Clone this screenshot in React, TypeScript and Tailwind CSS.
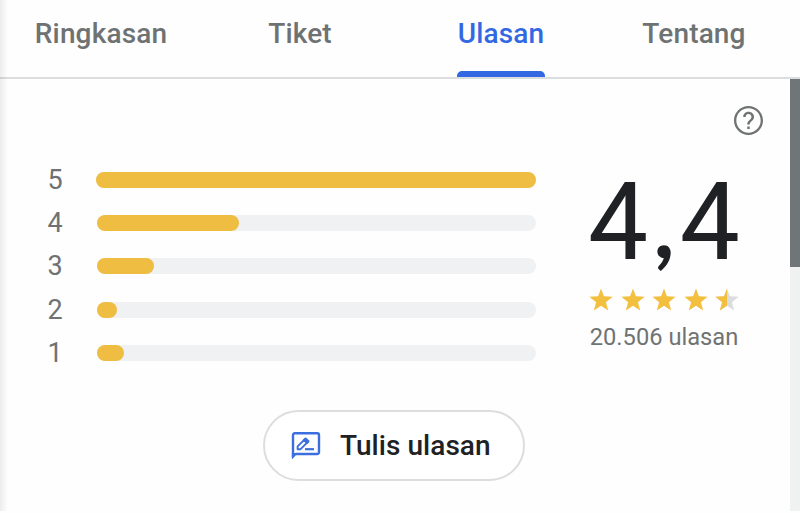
const tabs = [
  { label: 'Ringkasan', box: 'ml-[35px] w-[132px]', tone: 'text-[#6f7272]', active: false },
  { label: 'Tiket', box: 'ml-[102px] w-[62px]', tone: 'text-[#6f7272]', active: false },
  { label: 'Ulasan', box: 'ml-[126px] w-[88px]', tone: 'text-[#3268e2]', active: true },
  { label: 'Tentang', box: 'ml-[97px] w-[104px]', tone: 'text-[#6f7272]', active: false },
];

const ratings = [
  { stars: 5, width: 440 },
  { stars: 4, width: 142 },
  { stars: 3, width: 57 },
  { stars: 2, width: 20 },
  { stars: 1, width: 27.5 },
];

const starPath =
  'M12 0.6 L14.9 8.3 L23.6 8.8 L16.9 14.2 L19.2 22.6 L12 17.8 L4.8 22.6 L7.1 14.2 L0.4 8.8 L9.1 8.3 Z';

function Star({ half = false }: { half?: boolean }) {
  return (
    <svg viewBox="0 0 24 24" className="block h-6 w-6 shrink-0">
      <defs>
        <clipPath id="left-half">
          <rect x="0" y="0" width="12" height="24" />
        </clipPath>
      </defs>
      <path d={starPath} fill={half ? '#dadce0' : '#f3bf3e'} />
      {half && <path d={starPath} fill="#f3bf3e" clipPath="url(#left-half)" />}
    </svg>
  );
}

function HelpIcon() {
  return (
    <svg viewBox="2 2 20 20" className="block h-[29px] w-[29px]" fill="#707373">
      <path d="M11.150 17.800h1.700v-1.700h-1.700v1.700zm.85-15.800C6.480 2 2 6.480 2 12s4.480 10 10 10 10-4.480 10-10S17.520 2 12 2zm0 18.400c-4.640 0-8.400-3.760-8.400-8.400s3.760-8.400 8.400-8.400 8.400 3.760 8.400 8.400-3.760 8.400-8.400 8.400zM12 6c-2.010 0-3.650 1.500-3.650 3.600h1.700c0-1.170.8-2.050 1.950-2.050s2.050.88 2.050 2.050c0 2-2.950 2.250-2.950 5.200h1.750c0-2.150 2.950-2.700 2.950-5.200 0-2.110-1.690-3.600-3.800-3.600z" />
    </svg>
  );
}

function ReviewIcon() {
  return (
    <svg viewBox="0 0 30 30" className="block h-[30px] w-[30px]" fill="none" stroke="#3b6fe0">
      <path d="M2 26V4a1.700 1.700 0 0 1 1.700-1.700h22.600A1.700 1.700 0 0 1 28 4v17.300a1.700 1.700 0 0 1-1.700 1.700H4.500" strokeWidth="2.400" />
      <path d="M0.900 28.500V22h6z" fill="#3b6fe0" stroke="none" />
      <path d="M6.600 18.200v-2.800l6.600-6.600 2.900 2.900-6.500 6.500z" strokeWidth="1.900" strokeLinejoin="round" />
      <path d="M11.600 8.900l1.900-1.900a1.500 1.500 0 0 1 2.100 0l2.300 2.300a1.500 1.500 0 0 1 0 2.100l-1.900 1.900z" fill="#3b6fe0" stroke="none" />
      <path d="M14 18.200h9" strokeWidth="2.200" />
    </svg>
  );
}

export default function App() {
  return (
    <div className="relative h-[513px] w-[800px] overflow-hidden bg-[#fefefe] font-['Roboto',sans-serif]">
      <nav className="flex h-[79px] border-b-2 border-[#dcdddf]">
        {tabs.map((tab) => (
          <div key={tab.label} className={`flex shrink-0 flex-col justify-between ${tab.box}`}>
            <span className={`mt-4 flex justify-center text-[28px] leading-9 font-medium tracking-[0.15px] whitespace-nowrap ${tab.tone}`}>
              {tab.label}
            </span>
            {tab.active && <span className="h-1.5 rounded-t-[5px] bg-[#3268e2]" />}
          </div>
        ))}
      </nav>

      <div className="flex h-[432px]">
        <main className="w-[790px]">
          <div className="flex justify-end pt-[27px] pr-[27px]">
            <HelpIcon />
          </div>

          <section className="flex h-[240px] pt-[23px]">
            <div className="ml-[47.500px] w-[488.500px]">
              {ratings.map((row) => (
                <div key={row.stars} className="flex h-[43.3px] items-center">
                  <span className="w-[49px] text-[27px] leading-8 text-[#6f7272]">{row.stars}</span>
                  <div className="h-4 flex-1 rounded-full bg-[#f0f1f2]">
                    <div className="h-4 max-w-full rounded-full bg-[#eebd41]" style={{ width: row.width }} />
                  </div>
                </div>
              ))}
            </div>

            <div className="ml-[52px] flex w-[152px] flex-col items-center">
              <div className="flex h-[130px] w-[152px] justify-between text-[107px] leading-[130px] whitespace-nowrap text-[#202124]">
                <span>4</span>
                <span className="font-['Lato',sans-serif] text-[90px] font-bold">,</span>
                <span>4</span>
              </div>
              <div className="flex w-[150px] justify-between">
                <Star />
                <Star />
                <Star />
                <Star />
                <Star half />
              </div>
              <div className="mt-[11px] text-[23.700px] leading-7 whitespace-nowrap text-[#707373]">20.506 ulasan</div>
            </div>
          </section>

          <button className="mt-[35px] ml-[263px] flex h-[71px] w-[262px] items-center rounded-full border-2 border-[#dcdddf] bg-white pl-[26px]">
            <ReviewIcon />
            <span className="ml-[19px] text-[28px] leading-8 font-medium tracking-[0.05px] whitespace-nowrap text-[#202124]">Tulis ulasan</span>
          </button>
        </main>
        <aside className="w-[10px] bg-[#f0f2f2]">
          <div className="h-[188px] bg-[#707577]" />
        </aside>
      </div>
      <div className="pointer-events-none absolute top-0 left-0 h-[511px] w-2 bg-linear-to-r from-black/7 to-transparent" />
    </div>
  );
}
